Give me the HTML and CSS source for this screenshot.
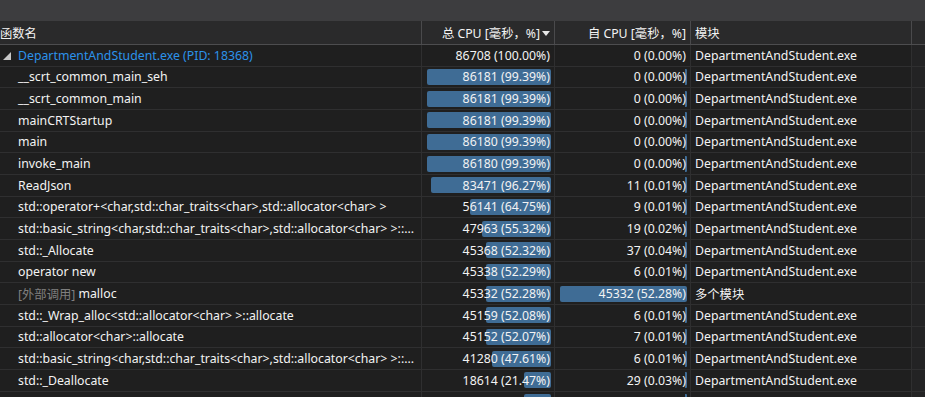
FILE: index.html
```html
<!DOCTYPE html>
<html lang="zh">
<head>
<meta charset="utf-8">
<link rel="stylesheet" href="styles.css">
</head>
<body>
<div class="topbar"></div>
<div class="grid">
  <div class="hrow">
    <div class="hc name">函数名</div>
    <div class="hc num">总 CPU [毫秒，%]<svg class="sort" width="8" height="5" viewBox="0 0 8 5"><path d="M0 0H8L4 5Z" fill="#e8e8e8"/></svg></div>
    <div class="hc num self">自 CPU [毫秒，%]</div>
    <div class="hc mod">模块</div>
    <div class="hc rest"></div>
  </div>

  <div class="row">
    <div class="c name"><svg class="tri" width="8" height="8" viewBox="0 0 8 8"><path d="M8 0V8H0Z" fill="#c8c8c8"/></svg><span class="root">DepartmentAndStudent.exe (PID: 18368)</span></div>
    <div class="c num"><span class="v">86708 (100.00%)</span></div>
    <div class="c num self"><span class="v">0 (0.00%)</span></div>
    <div class="c mod">DepartmentAndStudent.exe</div>
    <div class="c rest"></div>
  </div>
  <div class="row">
    <div class="c name"><span class="fn">__scrt_common_main_seh</span></div>
    <div class="c num"><span class="bar" style="width:124px"></span><span class="v">86181 (99.39%)</span></div>
    <div class="c num self"><span class="bar thin"></span><span class="v">0 (0.00%)</span></div>
    <div class="c mod">DepartmentAndStudent.exe</div>
    <div class="c rest"></div>
  </div>
  <div class="row">
    <div class="c name"><span class="fn">__scrt_common_main</span></div>
    <div class="c num"><span class="bar" style="width:124px"></span><span class="v">86181 (99.39%)</span></div>
    <div class="c num self"><span class="bar thin"></span><span class="v">0 (0.00%)</span></div>
    <div class="c mod">DepartmentAndStudent.exe</div>
    <div class="c rest"></div>
  </div>
  <div class="row">
    <div class="c name"><span class="fn">mainCRTStartup</span></div>
    <div class="c num"><span class="bar" style="width:124px"></span><span class="v">86181 (99.39%)</span></div>
    <div class="c num self"><span class="bar thin"></span><span class="v">0 (0.00%)</span></div>
    <div class="c mod">DepartmentAndStudent.exe</div>
    <div class="c rest"></div>
  </div>
  <div class="row">
    <div class="c name"><span class="fn">main</span></div>
    <div class="c num"><span class="bar" style="width:124px"></span><span class="v">86180 (99.39%)</span></div>
    <div class="c num self"><span class="bar thin"></span><span class="v">0 (0.00%)</span></div>
    <div class="c mod">DepartmentAndStudent.exe</div>
    <div class="c rest"></div>
  </div>
  <div class="row">
    <div class="c name"><span class="fn">invoke_main</span></div>
    <div class="c num"><span class="bar" style="width:124px"></span><span class="v">86180 (99.39%)</span></div>
    <div class="c num self"><span class="bar thin"></span><span class="v">0 (0.00%)</span></div>
    <div class="c mod">DepartmentAndStudent.exe</div>
    <div class="c rest"></div>
  </div>
  <div class="row">
    <div class="c name"><span class="fn">ReadJson</span></div>
    <div class="c num"><span class="bar" style="width:120px"></span><span class="v">83471 (96.27%)</span></div>
    <div class="c num self"><span class="bar thin"></span><span class="v">11 (0.01%)</span></div>
    <div class="c mod">DepartmentAndStudent.exe</div>
    <div class="c rest"></div>
  </div>
  <div class="row">
    <div class="c name"><span class="fn">std::operator+&lt;char,std::char_traits&lt;char&gt;,std::allocator&lt;char&gt; &gt;</span></div>
    <div class="c num"><span class="bar" style="width:81px"></span><span class="v">56141 (64.75%)</span></div>
    <div class="c num self"><span class="bar thin"></span><span class="v">9 (0.01%)</span></div>
    <div class="c mod">DepartmentAndStudent.exe</div>
    <div class="c rest"></div>
  </div>
  <div class="row">
    <div class="c name"><span class="fn">std::basic_string&lt;char,std::char_traits&lt;char&gt;,std::allocator&lt;char&gt; &gt;::...</span></div>
    <div class="c num"><span class="bar" style="width:69px"></span><span class="v">47963 (55.32%)</span></div>
    <div class="c num self"><span class="bar thin"></span><span class="v">19 (0.02%)</span></div>
    <div class="c mod">DepartmentAndStudent.exe</div>
    <div class="c rest"></div>
  </div>
  <div class="row">
    <div class="c name"><span class="fn">std::_Allocate</span></div>
    <div class="c num"><span class="bar" style="width:65px"></span><span class="v">45368 (52.32%)</span></div>
    <div class="c num self"><span class="bar thin"></span><span class="v">37 (0.04%)</span></div>
    <div class="c mod">DepartmentAndStudent.exe</div>
    <div class="c rest"></div>
  </div>
  <div class="row">
    <div class="c name"><span class="fn">operator new</span></div>
    <div class="c num"><span class="bar" style="width:65px"></span><span class="v">45338 (52.29%)</span></div>
    <div class="c num self"><span class="bar thin"></span><span class="v">6 (0.01%)</span></div>
    <div class="c mod">DepartmentAndStudent.exe</div>
    <div class="c rest"></div>
  </div>
  <div class="row">
    <div class="c name"><span class="ext">[外部调用]</span><span class="fn">&nbsp;malloc</span></div>
    <div class="c num"><span class="bar" style="width:65px"></span><span class="v">45332 (52.28%)</span></div>
    <div class="c num self"><span class="bar" style="width:127px"></span><span class="v">45332 (52.28%)</span></div>
    <div class="c mod">多个模块</div>
    <div class="c rest"></div>
  </div>
  <div class="row">
    <div class="c name"><span class="fn">std::_Wrap_alloc&lt;std::allocator&lt;char&gt; &gt;::allocate</span></div>
    <div class="c num"><span class="bar" style="width:65px"></span><span class="v">45159 (52.08%)</span></div>
    <div class="c num self"><span class="bar thin"></span><span class="v">6 (0.01%)</span></div>
    <div class="c mod">DepartmentAndStudent.exe</div>
    <div class="c rest"></div>
  </div>
  <div class="row">
    <div class="c name"><span class="fn">std::allocator&lt;char&gt;::allocate</span></div>
    <div class="c num"><span class="bar" style="width:65px"></span><span class="v">45152 (52.07%)</span></div>
    <div class="c num self"><span class="bar thin"></span><span class="v">7 (0.01%)</span></div>
    <div class="c mod">DepartmentAndStudent.exe</div>
    <div class="c rest"></div>
  </div>
  <div class="row">
    <div class="c name"><span class="fn">std::basic_string&lt;char,std::char_traits&lt;char&gt;,std::allocator&lt;char&gt; &gt;::...</span></div>
    <div class="c num"><span class="bar" style="width:59px"></span><span class="v">41280 (47.61%)</span></div>
    <div class="c num self"><span class="bar thin"></span><span class="v">6 (0.01%)</span></div>
    <div class="c mod">DepartmentAndStudent.exe</div>
    <div class="c rest"></div>
  </div>
  <div class="row">
    <div class="c name"><span class="fn">std::_Deallocate</span></div>
    <div class="c num"><span class="bar" style="width:27px"></span><span class="v">18614 (21.47%)</span></div>
    <div class="c num self"><span class="bar thin"></span><span class="v">29 (0.03%)</span></div>
    <div class="c mod">DepartmentAndStudent.exe</div>
    <div class="c rest"></div>
  </div>
  <div class="row">
    <div class="c name"></div>
    <div class="c num"><span class="bar" style="width:27px"></span></div>
    <div class="c num self"><span class="bar thin"></span></div>
    <div class="c mod"></div>
    <div class="c rest"></div>
  </div>
</div>
</body>
</html>
```

FILE: styles.css
```css
html, body {
  margin: 0;
  padding: 0;
  background: #1f1f1f;
  overflow: hidden;
}
body {
  width: 925px;
  height: 397px;
  font-family: "Noto Sans", "Noto Sans CJK SC", sans-serif;
  font-size: 12.3px;
  color: #f3f3f3;
}
.topbar {
  height: 21px;
  background: #3d3d3f;
}
.grid {
  display: flex;
  flex-direction: column;
}
.hrow, .row {
  display: grid;
  grid-template-columns: 422px 133px 136px 221px 13px;
}
.hrow {
  height: 23px;
  background: #2a2a2b;
  border-bottom: 1px solid #4d4d4f;
}
.row {
  height: 20.667px;
  border-bottom: 1px solid #2f2f30;
}
.hc {
  display: flex;
  align-items: center;
  white-space: nowrap;
  overflow: hidden;
  border-right: 1px solid #4a4a4c;
}
.hc.name { padding-left: 0; }
.hc.num {
  justify-content: flex-end;
  padding-right: 4px;
}
.hc.self { padding-right: 4px; }
.hc.mod { padding-left: 4px; }
.hc.rest { border-right: none; }
.sort { margin-left: 2px; margin-top: 1px; }

.c {
  position: relative;
  display: flex;
  align-items: center;
  white-space: nowrap;
  overflow: hidden;
  border-right: 1px solid #2f2f30;
}
.c.rest {
  border-right: none;
  background: #232324;
}
.c.name { padding-left: 18px; }
.tri {
  position: absolute;
  left: 3px;
  top: 7px;
}
.root { color: #2c92ea; }
.ext { color: #7f7f7f; }
.c.num {
  justify-content: flex-end;
  padding-right: 4px;
}
.c.self { padding-right: 4px; }
.c.mod { padding-left: 4px; }
.bar {
  position: absolute;
  right: 3px;
  top: 2.5px;
  height: 16px;
  background: #3f6c95;
  border-radius: 2px;
}
.bar.thin {
  width: 2px;
  border-radius: 0 1px 1px 0;
}
.v { position: relative; }
```
